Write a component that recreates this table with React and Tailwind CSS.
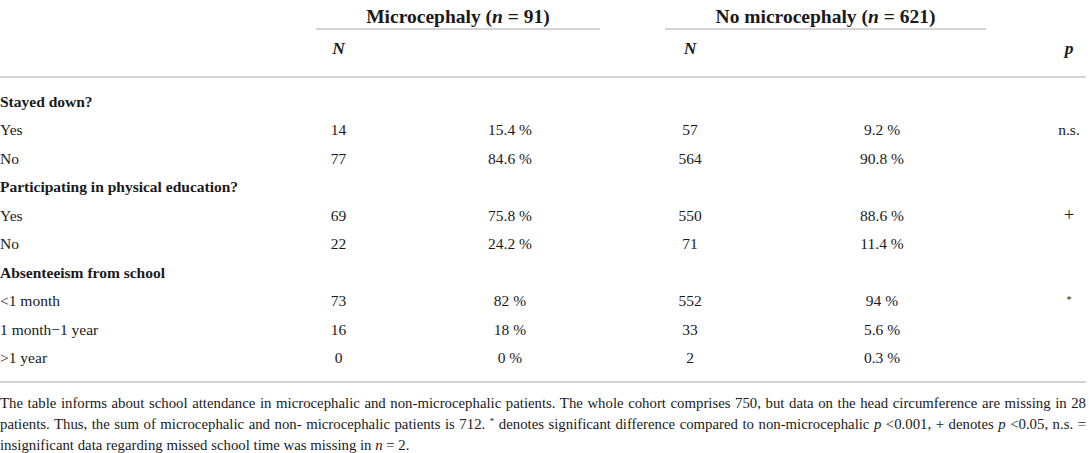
import React from "react";

const GRID = "grid grid-cols-[316px_45px_239px_65px_50px_271px_100px]";

function Rule() {
  return <div className="h-[2px] w-full bg-[#d4d4d4]" />;
}

function SectionRow({ label }) {
  return (
    <div className={`${GRID} h-[28.5px] items-center`}>
      <div className="col-span-7 font-bold">{label}</div>
    </div>
  );
}

function DataRow({ label, n1, p1, n2, p2, p }) {
  return (
    <div className={`${GRID} h-[28.5px] items-center`}>
      <div>{label}</div>
      <div className="text-center">{n1}</div>
      <div className="pl-[59px] text-center">{p1}</div>
      <div />
      <div className="text-center">{n2}</div>
      <div className="pl-[63px] text-center">{p2}</div>
      <div className="pl-[66px] text-center">{p}</div>
    </div>
  );
}

export default function App() {
  return (
    <div className="w-[1089px] h-[453px] overflow-hidden bg-white text-[#1a1a1a] font-['Liberation_Serif',serif] text-[15.5px]">
      <div className="w-[1086px]">
        {/* header row 1 */}
        <div className={`${GRID} h-[28px] pt-[5px] items-center`}>
          <div />
          <div className="col-span-2 text-center font-bold text-[19.5px] leading-[24px]">
            Microcephaly (<i>n</i>&nbsp;=&nbsp;91)
          </div>
          <div />
          <div className="col-span-2 text-center font-bold text-[19.5px] leading-[24px]">
            No microcephaly (<i>n</i>&nbsp;=&nbsp;621)
          </div>
          <div />
        </div>
        <div className={GRID}>
          <div />
          <div className="col-span-2 h-[2px] bg-[#d4d4d4]" />
          <div />
          <div className="col-span-2 h-[2px] bg-[#d4d4d4]" />
          <div />
        </div>
        {/* header row 2 */}
        <div className={`${GRID} h-[46px] items-start pt-[5px] text-[17.5px] font-bold italic`}>
          <div />
          <div className="text-center">N</div>
          <div />
          <div />
          <div className="text-center">N</div>
          <div />
          <div className="pl-[66px] text-center">p</div>
        </div>
        <Rule />
        <div className="pt-[9px] pb-[9px]">
          <SectionRow label="Stayed down?" />
          <DataRow label="Yes" n1="14" p1="15.4 %" n2="57" p2="9.2 %" p="n.s." />
          <DataRow label="No" n1="77" p1="84.6 %" n2="564" p2="90.8 %" p="" />
          <SectionRow label="Participating in physical education?" />
          <DataRow
            label="Yes"
            n1="69"
            p1="75.8 %"
            n2="550"
            p2="88.6 %"
            p={<span className="text-[18px] font-light">+</span>}
          />
          <DataRow label="No" n1="22" p1="24.2 %" n2="71" p2="11.4 %" p="" />
          <SectionRow label="Absenteeism from school" />
          <DataRow
            label="<1 month"
            n1="73"
            p1="82 %"
            n2="552"
            p2="94 %"
            p={<span className="relative -top-[3px] text-[10px]">*</span>}
          />
          <DataRow label="1 month−1 year" n1="16" p1="18 %" n2="33" p2="5.6 %" p="" />
          <DataRow label=">1 year" n1="0" p1="0 %" n2="2" p2="0.3 %" p="" />
        </div>
        <Rule />
        <p className="mt-[10px] text-[14.8px] leading-[21px] text-justify">
          The table informs about school attendance in microcephalic and non-microcephalic patients. The whole cohort comprises 750, but data on the head circumference are missing in 28 patients. Thus, the sum of microcephalic and non- microcephalic patients is 712.{" "}
          <span className="relative -top-[5px] text-[9px] leading-none">*</span> denotes significant difference compared to non-microcephalic <i>p</i> &lt;0.001, + denotes <i>p</i> &lt;0.05, n.s. = insignificant data regarding missed school time was missing in <i>n</i> = 2.
        </p>
      </div>
    </div>
  );
}
